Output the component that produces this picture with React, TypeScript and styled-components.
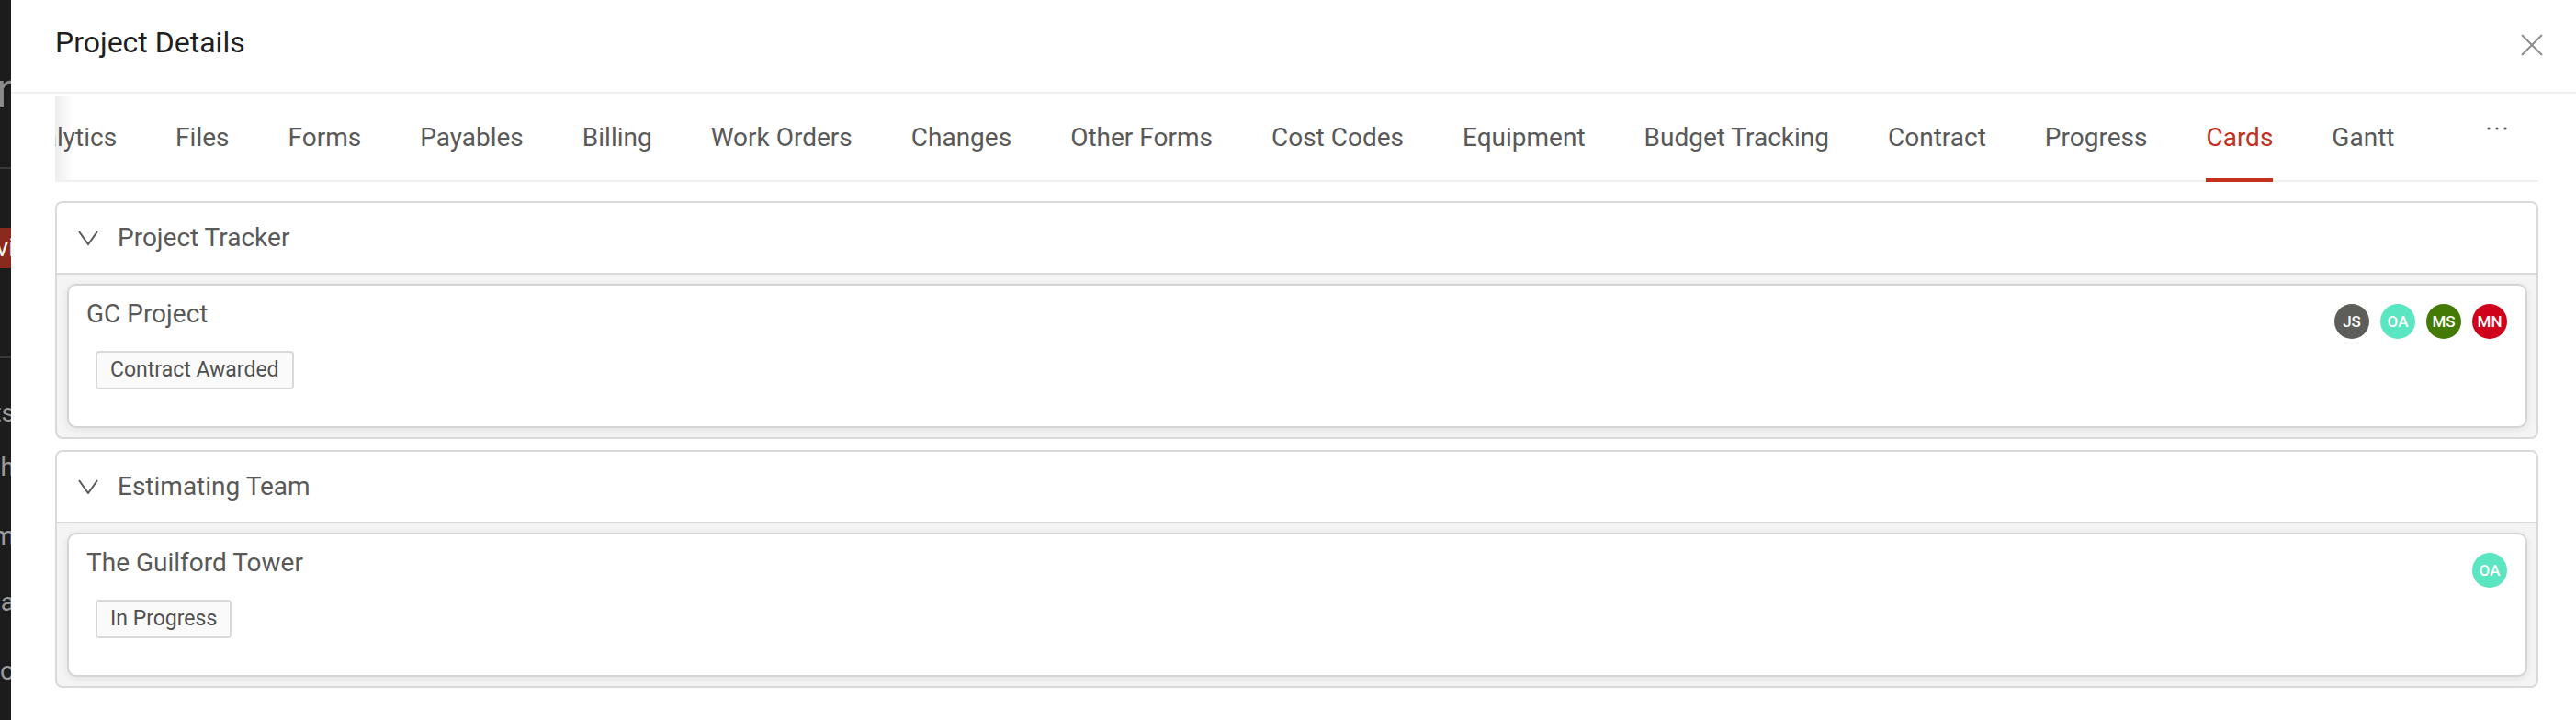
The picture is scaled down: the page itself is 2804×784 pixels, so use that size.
import React from 'react'
import styled, { createGlobalStyle } from 'styled-components'

const GlobalStyle = createGlobalStyle`
  html, body {
    margin: 0;
    padding: 0;
    background: #fff;
  }
  body {
    font-family: Roboto, 'Liberation Sans', sans-serif;
  }
  * {
    box-sizing: border-box;
  }
`

const tabs = [
  'Analytics',
  'Files',
  'Forms',
  'Payables',
  'Billing',
  'Work Orders',
  'Changes',
  'Other Forms',
  'Cost Codes',
  'Equipment',
  'Budget Tracking',
  'Contract',
  'Progress',
  'Cards',
  'Gantt',
]

const groups = [
  {
    title: 'Project Tracker',
    cards: [
      {
        name: 'GC Project',
        status: 'Contract Awarded',
        people: [
          { initials: 'JS', color: '#5d5e59' },
          { initials: 'OA', color: '#5ae6c0' },
          { initials: 'MS', color: '#437a04' },
          { initials: 'MN', color: '#d0021b' },
        ],
      },
    ],
  },
  {
    title: 'Estimating Team',
    cards: [
      {
        name: 'The Guilford Tower',
        status: 'In Progress',
        people: [{ initials: 'OA', color: '#5ae6c0' }],
      },
    ],
  },
]

// sidebar behind the modal, only its right edge shows
const sideItems = [
  { label: 'Projects', gap: 42 },
  { label: 'Search', gap: 23 },
  { label: 'Team', gap: 39 },
  { label: 'Data', gap: 36 },
  { label: 'Repo', gap: 39 },
]

export default function App() {
  return (
    <>
      <GlobalStyle />
      <Page>
        <Sidebar>
          <SideLogo>n</SideLogo>
          <SideRule $gap={56} />
          <SideActive>
            <span>Overvi</span>
          </SideActive>
          <SideRule $gap={96} />
          {sideItems.map((item) => (
            <SideItem key={item.label} $gap={item.gap}>
              <span>{item.label}</span>
            </SideItem>
          ))}
        </Sidebar>

        <Modal>
          <ModalHeader>
            <Title>Project Details</Title>
            <CloseButton aria-label='Close'>
              <svg width='24' height='24' viewBox='0 0 24 24'>
                <path d='M1 1 L23 23 M23 1 L1 23' stroke='#8c8c8c' strokeWidth='2' fill='none' />
              </svg>
            </CloseButton>
          </ModalHeader>

          <Body>
            <TabBar>
              <NavWrap>
                <NavList>
                  {tabs.map((tab) => (
                    <Tab key={tab} $active={tab === 'Cards'}>
                      {tab}
                    </Tab>
                  ))}
                </NavList>
              </NavWrap>
              <MoreButton>
                <svg width='22' height='4' viewBox='0 0 22 4'>
                  <circle cx='2' cy='2' r='1.6' fill='#595959' />
                  <circle cx='11' cy='2' r='1.6' fill='#595959' />
                  <circle cx='20' cy='2' r='1.6' fill='#595959' />
                </svg>
              </MoreButton>
            </TabBar>

            <Panels>
              {groups.map((group) => (
                <Panel key={group.title}>
                  <PanelHeader>
                    <svg width='22' height='16' viewBox='0 0 22 16'>
                      <polyline
                        points='1,1 11,15 21,1'
                        stroke='#595959'
                        strokeWidth='2'
                        fill='none'
                      />
                    </svg>
                    <span>{group.title}</span>
                  </PanelHeader>
                  <PanelBody>
                    {group.cards.map((card) => (
                      <Card key={card.name}>
                        <CardTop>
                          <CardTitle>{card.name}</CardTitle>
                          <Avatars>
                            {card.people.map((p) => (
                              <Avatar key={p.initials} $bg={p.color}>
                                {p.initials}
                              </Avatar>
                            ))}
                          </Avatars>
                        </CardTop>
                        <Tag>{card.status}</Tag>
                      </Card>
                    ))}
                  </PanelBody>
                </Panel>
              ))}
            </Panels>
          </Body>
        </Modal>
      </Page>
    </>
  )
}

const Page = styled.div`
  display: flex;
  height: 784px;
  overflow: hidden;
`

const Sidebar = styled.div`
  width: 12px;
  flex: none;
  background: #1c1c1c;
  overflow: hidden;
  display: flex;
  flex-direction: column;
  padding-top: 70px;
`

const SideLogo = styled.div`
  display: flex;
  justify-content: flex-end;
  font-size: 56px;
  line-height: 56px;
  color: #8a8a8a;
  margin-right: -14px;
`

const SideRule = styled.div<{ $gap: number }>`
  height: 2px;
  background: #3a3a3a;
  margin-top: ${(p) => p.$gap}px;
`

const SideActive = styled.div`
  display: flex;
  justify-content: flex-end;
  white-space: nowrap;
  height: 44px;
  line-height: 44px;
  margin-top: 64px;
  background: #8a2a1c;
  color: #fff;
  font-size: 28px;

  span {
    margin-right: -4px;
  }
`

const SideItem = styled.div<{ $gap: number }>`
  display: flex;
  justify-content: flex-end;
  white-space: nowrap;
  height: 36px;
  line-height: 36px;
  margin-top: ${(p) => p.$gap}px;
  color: #9a9a9a;
  font-size: 28px;

  span {
    margin-right: -4px;
  }
`

const Modal = styled.div`
  flex: 1;
  min-width: 0;
  background: #fff;
  display: flex;
  flex-direction: column;
`

const ModalHeader = styled.div`
  display: flex;
  justify-content: space-between;
  align-items: flex-start;
  height: 102px;
  padding: 24px 36px 0 48px;
  border-bottom: 2px solid #f0f0f0;
`

const Title = styled.div`
  font-size: 32px;
  line-height: 44px;
  color: #1f1f1f;
`

const CloseButton = styled.button`
  border: 0;
  background: none;
  padding: 0;
  margin-top: 13px;
  display: flex;
  cursor: pointer;
`

const Body = styled.div`
  padding: 2px 41px 0 48px;
`

const TabBar = styled.div`
  display: flex;
  height: 94px;
  box-shadow: inset 0 -2px 0 #f0f0f0;
`

const NavWrap = styled.div`
  flex: 1;
  min-width: 0;
  overflow: hidden;
  position: relative;

  &::before {
    content: '';
    position: absolute;
    left: 0;
    top: 0;
    bottom: 2px;
    width: 20px;
    z-index: 1;
    background: linear-gradient(to right, rgba(0, 0, 0, 0.07), rgba(0, 0, 0, 0));
  }
`

const NavList = styled.div`
  display: flex;
  gap: 64px;
  margin-left: -47px;
`

const Tab = styled.div<{ $active?: boolean }>`
  position: relative;
  padding: 24px 0 26px;
  font-size: 28px;
  line-height: 44px;
  white-space: nowrap;
  color: ${(p) => (p.$active ? '#c4301c' : '#595959')};

  &::after {
    content: '';
    position: absolute;
    left: 0;
    right: 0;
    bottom: 0;
    height: 4px;
    background: ${(p) => (p.$active ? '#c4301c' : 'transparent')};
  }
`

const MoreButton = styled.div`
  width: 72px;
  margin-right: 9px;
  display: flex;
  justify-content: center;
  align-items: flex-start;
  padding-top: 34px;
`

const Panels = styled.div`
  display: flex;
  flex-direction: column;
  gap: 12px;
  padding-top: 21px;
`

const Panel = styled.div`
  border: 2px solid #d9d9d9;
  border-radius: 8px;
  overflow: hidden;
  background: #f4f4f4;
`

const PanelHeader = styled.div`
  display: flex;
  align-items: center;
  gap: 21px;
  height: 78px;
  padding-left: 23px;
  background: #fff;
  border-bottom: 2px solid #d9d9d9;
  font-size: 28px;
  line-height: 44px;
  color: #595959;
`

const PanelBody = styled.div`
  padding: 10px 10px 10px 11px;
`

const Card = styled.div`
  display: flex;
  flex-direction: column;
  align-items: flex-start;
  background: #fff;
  border: 2px solid #d4d4d4;
  border-radius: 10px;
  box-shadow: 0 2px 8px rgba(0, 0, 0, 0.08);
  padding: 11px 20px 40px 19px;
`

const CardTop = styled.div`
  align-self: stretch;
  display: flex;
  justify-content: space-between;
  align-items: flex-start;
  height: 40px;
`

const CardTitle = styled.div`
  font-size: 28px;
  line-height: 40px;
  color: #595959;
`

const Avatars = styled.div`
  display: flex;
  gap: 12px;
  margin-top: 9px;
`

const Avatar = styled.div<{ $bg: string }>`
  width: 38px;
  height: 38px;
  border-radius: 50%;
  background: ${(p) => p.$bg};
  color: #fff;
  font-size: 17px;
  font-weight: 500;
  display: flex;
  align-items: center;
  justify-content: center;
`

const Tag = styled.div`
  margin: 20px 0 0 10px;
  height: 42px;
  line-height: 38px;
  padding: 0 14px;
  border: 2px solid #d9d9d9;
  border-radius: 4px;
  background: #fafafa;
  font-size: 23px;
  color: #505050;
`
